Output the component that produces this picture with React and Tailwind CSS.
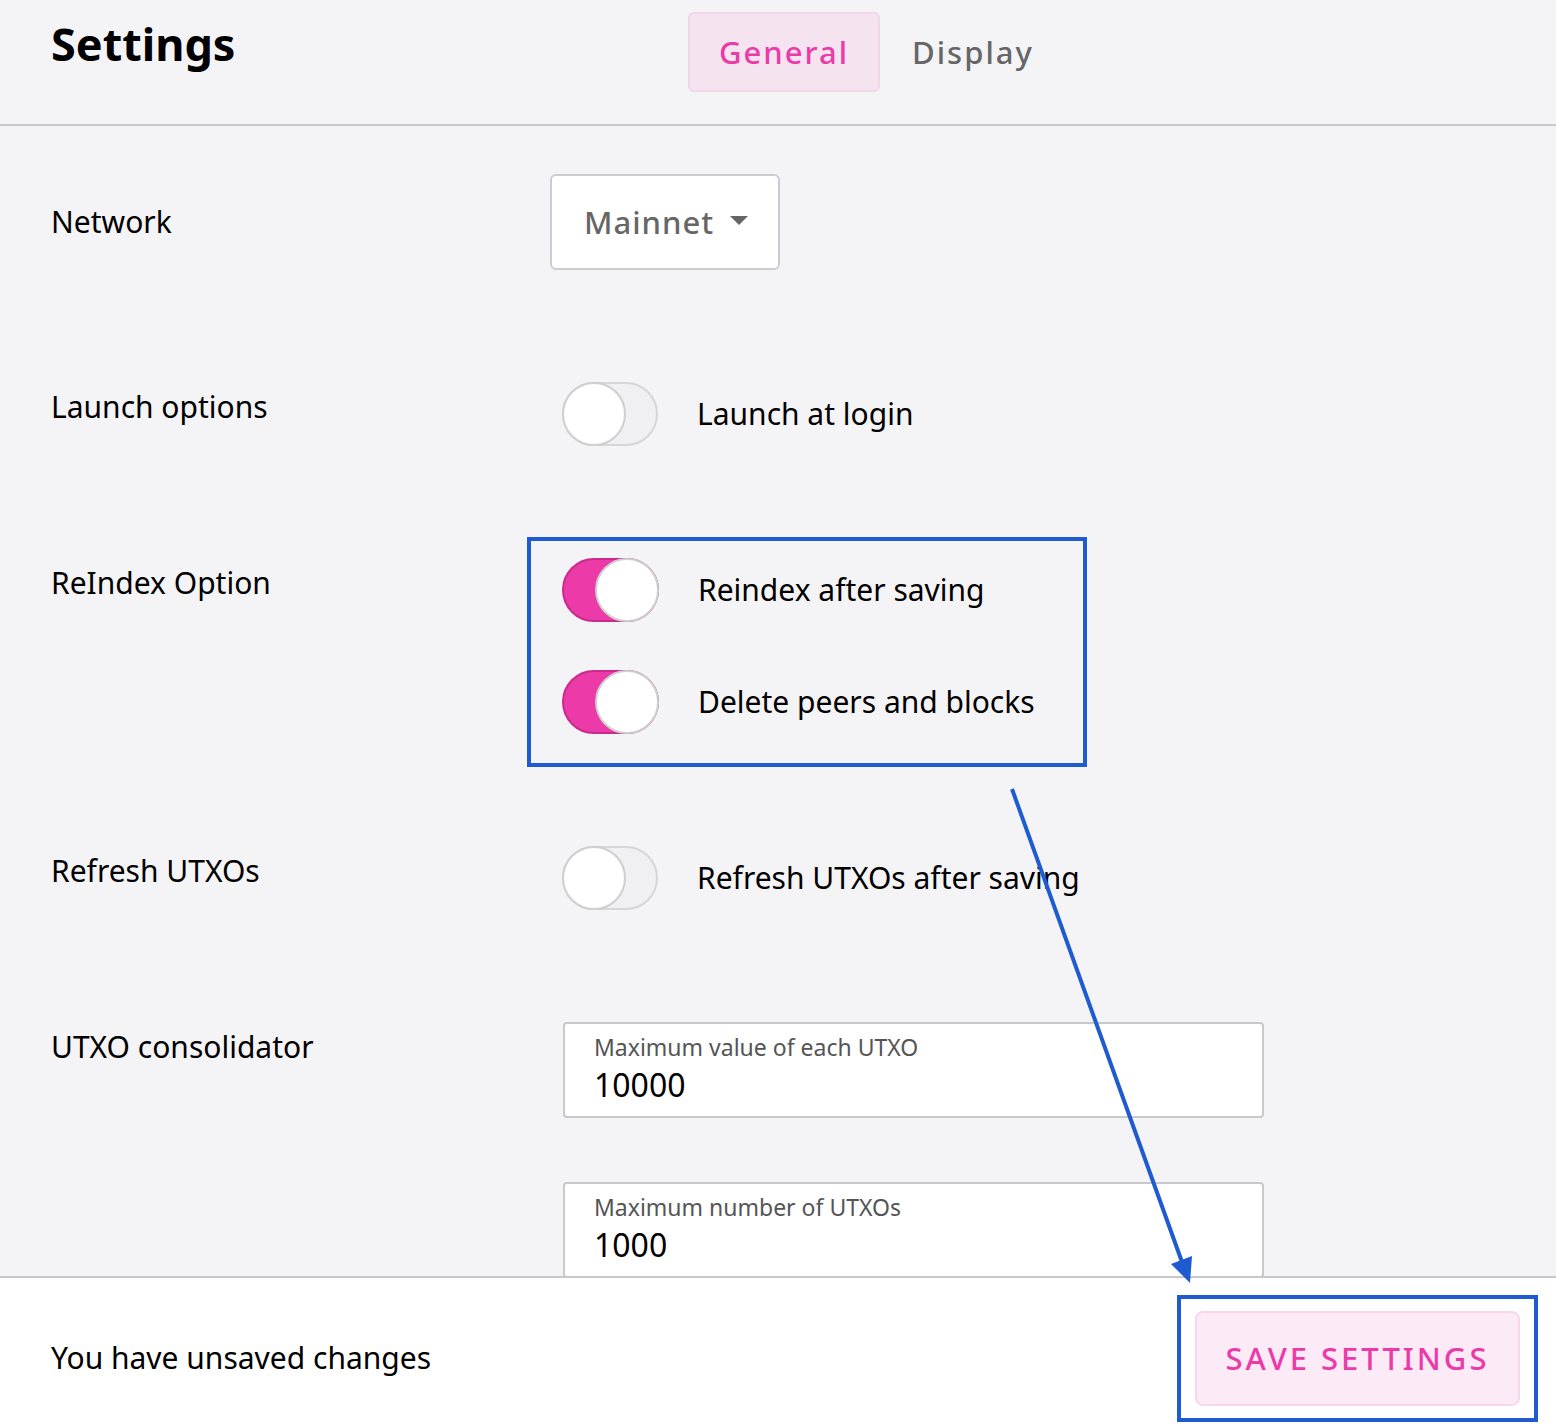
import React, { useState } from "react";

const Toggle = ({ on, onClick }) => (
  <button
    type="button"
    onClick={onClick}
    className={
      on
        ? "relative h-[64px] w-[97px] shrink-0 rounded-full border-2 border-[#c92b8d] bg-[#ec3aa8]"
        : "relative h-[64px] w-[96px] shrink-0 rounded-full border-2 border-[#d6d6d8] bg-[#f0f0f2]"
    }
  >
    <span
      className={
        on
          ? "absolute right-[-2px] top-[-2px] h-[64px] w-[64px] rounded-full border-2 border-[#cfcfcf] bg-white"
          : "absolute left-[-2px] top-[-2px] h-[64px] w-[64px] rounded-full border-2 border-[#cfcfcf] bg-white"
      }
    />
  </button>
);

const Row = ({ label, children, center }) => (
  <div className={center ? "grid grid-cols-[499px_1fr] items-center" : "grid grid-cols-[499px_1fr] items-start"}>
    <div className={center ? "text-[30px] leading-[36px] text-black" : "pt-[7px] text-[30px] leading-[36px] text-black"}>
      {label}
    </div>
    <div>{children}</div>
  </div>
);

const ToggleLine = ({ on, onClick, text }) => (
  <div className="ml-[12px] flex items-center gap-[39px]">
    <Toggle on={on} onClick={onClick} />
    <span className="text-[30px] leading-[36px] text-black">{text}</span>
  </div>
);

const Field = ({ label, value }) => (
  <div className="ml-[13px] flex h-[96px] w-[701px] flex-col rounded-[4px] border-2 border-[#c9c9cb] bg-white pl-[29px] pt-[8px]">
    <div className="text-[23px] leading-[31px] text-[#555]">{label}</div>
    <div className="text-[32px] leading-[44px] text-black">{value}</div>
  </div>
);

const App = () => {
  const [tab, setTab] = useState("general");
  const [opts, setOpts] = useState({
    launch: false,
    reindex: true,
    deletePeers: true,
    refresh: false,
  });

  const flip = (k) => setOpts((p) => ({ ...p, [k]: !p[k] }));

  return (
    <div className="relative flex h-[1428px] w-full flex-col overflow-hidden bg-[#f4f4f6] font-['Noto_Sans','Open_Sans',sans-serif]">
      {/* header */}
      <div className="flex h-[126px] shrink-0 items-start border-b-2 border-[#c8c8ca] pl-[51px]">
        <h1 className="mt-[14px] w-[637px] text-[45px] font-bold leading-[60px] text-black">Settings</h1>
        <div className="mt-[12px] flex items-center">
          <button
            onClick={() => setTab("general")}
            className={
              tab === "general"
                ? "h-[80px] w-[192px] rounded-[6px] border-2 border-[#f2d6ea] bg-[#f5e4f0] text-[31px] font-medium tracking-[2px] text-[#ec3aa8]"
                : "h-[80px] w-[192px] rounded-[6px] border-2 border-transparent text-[31px] font-medium tracking-[2px] text-[#666]"
            }
          >
            General
          </button>
          <button
            onClick={() => setTab("display")}
            className={
              tab === "display"
                ? "h-[80px] w-[186px] rounded-[6px] border-2 border-[#f2d6ea] bg-[#f5e4f0] text-[31px] font-medium tracking-[2px] text-[#ec3aa8]"
                : "h-[80px] w-[186px] rounded-[6px] border-2 border-transparent text-[31px] font-medium tracking-[2px] text-[#666]"
            }
          >
            Display
          </button>
        </div>
      </div>

      {/* body */}
      <div className="flex flex-1 flex-col gap-[112px] overflow-hidden pl-[51px] pt-[48px]">
        <Row label="Network" center>
          <div className="flex h-[96px] w-[230px] items-center justify-between rounded-[6px] border-2 border-[#cdcdcf] bg-white pl-[32px] pr-[30px]">
            <span className="text-[31px] font-medium tracking-[1px] text-[#666]">Mainnet</span>
            <svg width="18" height="9" viewBox="0 0 18 9" className="mb-[4px]">
              <path d="M0 0h18L9 9z" fill="#666" />
            </svg>
          </div>
        </Row>

        <Row label="Launch options">
          <ToggleLine on={opts.launch} onClick={() => flip("launch")} text="Launch at login" />
        </Row>

        <Row label="ReIndex Option">
          <div className="flex flex-col gap-[48px]">
            <ToggleLine on={opts.reindex} onClick={() => flip("reindex")} text="Reindex after saving" />
            <ToggleLine on={opts.deletePeers} onClick={() => flip("deletePeers")} text="Delete peers and blocks" />
          </div>
        </Row>

        <Row label="Refresh UTXOs">
          <ToggleLine on={opts.refresh} onClick={() => flip("refresh")} text="Refresh UTXOs after saving" />
        </Row>

        <Row label="UTXO consolidator">
          <div className="flex flex-col gap-[64px]">
            <Field label="Maximum value of each UTXO" value="10000" />
            <Field label="Maximum number of UTXOs" value="1000" />
          </div>
        </Row>
      </div>

      {/* footer */}
      <div className="flex h-[152px] shrink-0 items-center justify-between border-t-2 border-[#c8c8ca] bg-white pl-[51px] pr-[36px] pt-[10px]">
        <span className="text-[30px] leading-[36px] text-black">You have unsaved changes</span>
        <button className="h-[95px] w-[325px] rounded-[8px] border-2 border-[#f8d6ec] bg-[#fcebf6] text-[31px] font-medium tracking-[3px] text-[#ec3aa8]">
          SAVE SETTINGS
        </button>
      </div>

      {/* annotations */}
      <div className="pointer-events-none absolute left-[527px] top-[537px] h-[230px] w-[560px] border-4 border-[#1f5bd0]" />
      <div className="pointer-events-none absolute left-[1177px] top-[1295px] h-[127px] w-[361px] border-4 border-[#1f5bd0]" />
      <svg className="pointer-events-none absolute left-0 top-0" width="1556" height="1428">
        <line x1="1012" y1="789" x2="1182" y2="1262" stroke="#1f5bd0" strokeWidth="4" />
        <path d="M1190 1283 L1171 1264 L1192 1256 Z" fill="#1f5bd0" />
      </svg>
    </div>
  );
};

export default App;
